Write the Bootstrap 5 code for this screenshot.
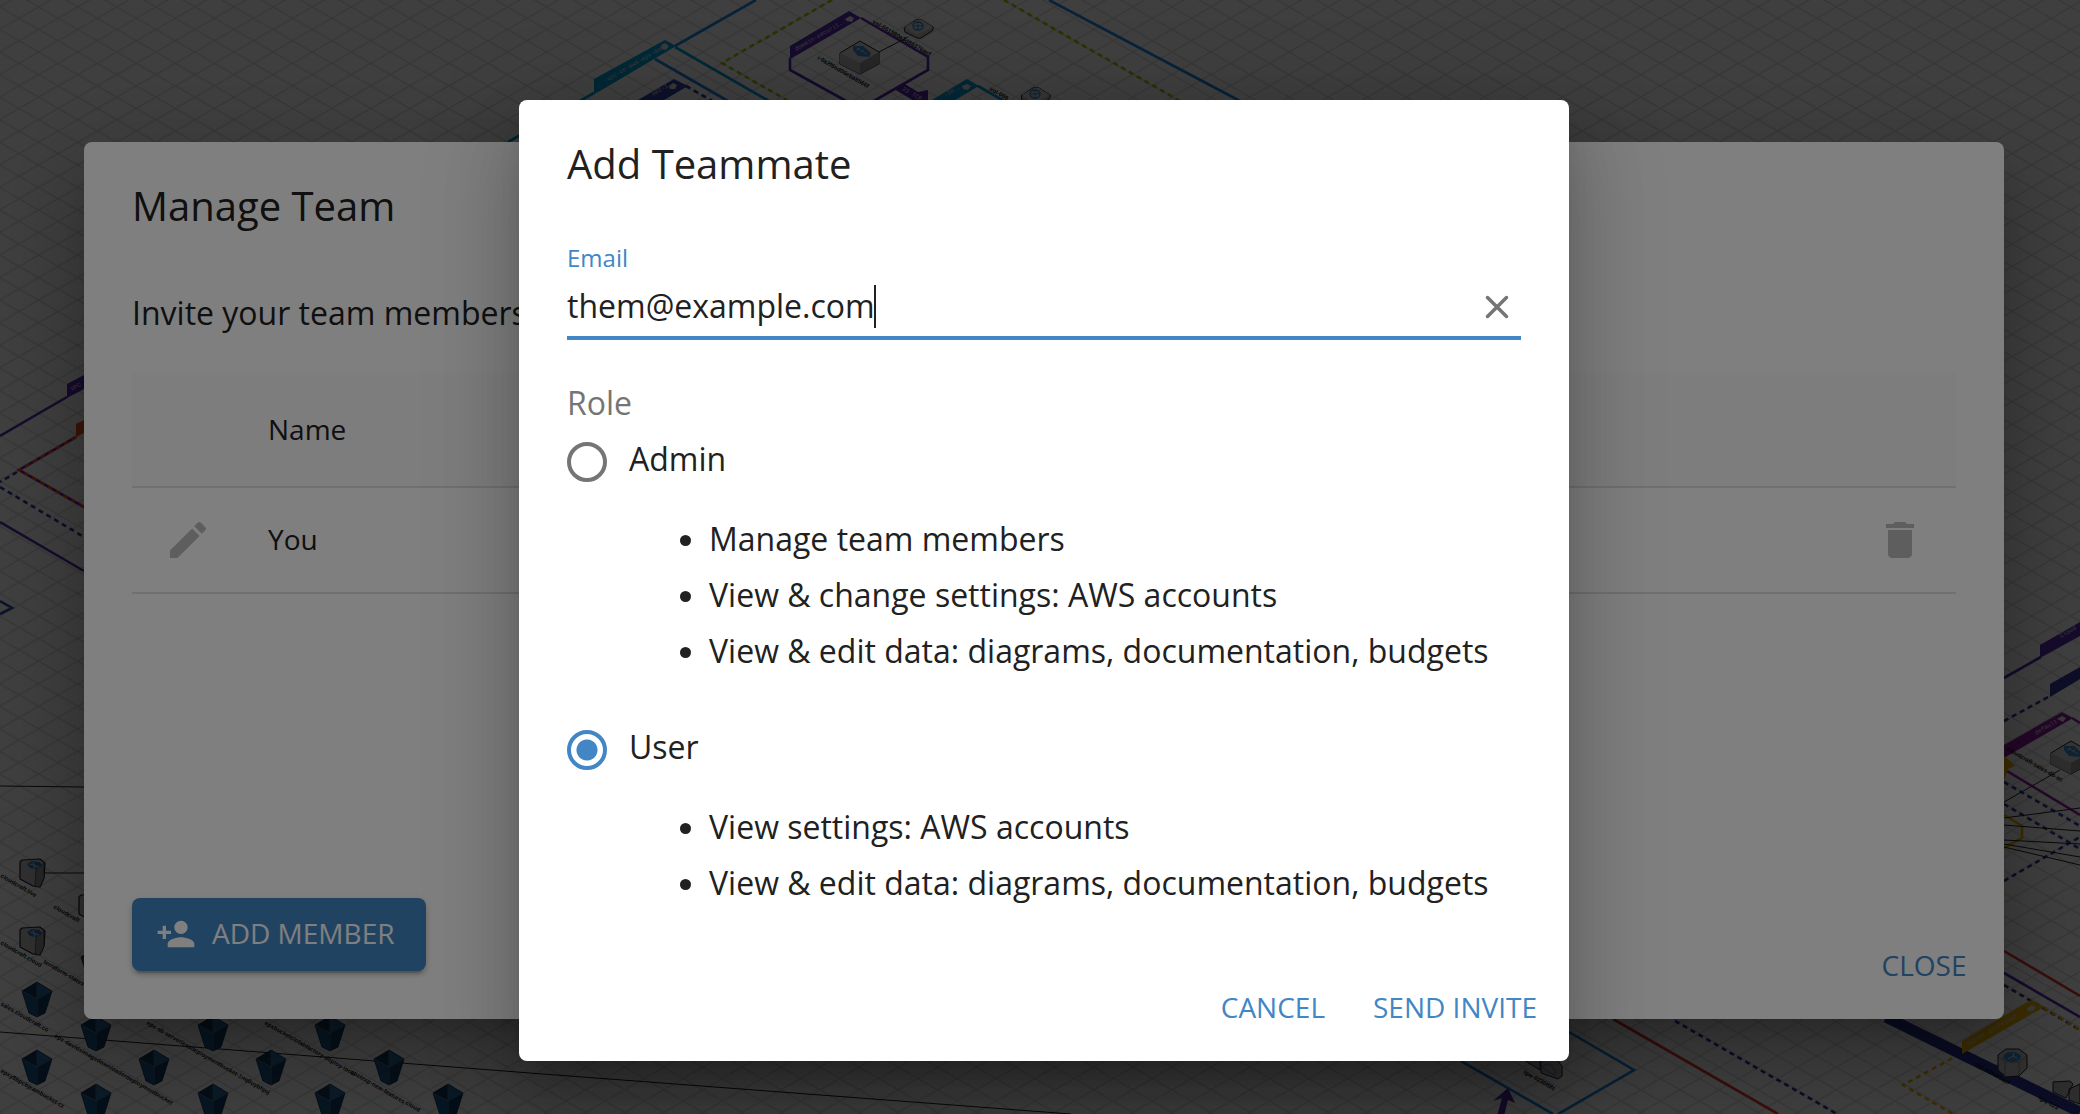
<!DOCTYPE html>
<html lang="en">
<head>
<meta charset="utf-8">
<meta name="viewport" content="width=device-width, initial-scale=1">
<title>Add Teammate</title>
<link href="https://cdn.jsdelivr.net/npm/bootstrap@5.3.0/dist/css/bootstrap.min.css" rel="stylesheet">
<style>
  :root { --brand: #4286c5; --ink: #212121; --muted: #757575; }
  body { font-family: "Open Sans", "Noto Sans", sans-serif; font-size: 32px; line-height: 56px; color: var(--ink); background: #fff; }
  .canvas-map { position: fixed; inset: 0; width: 100%; height: 100%; }
  .canvas-map text { font-family: "Liberation Sans", sans-serif; font-weight: 700; font-size: 6px; }
  .canvas-map .tag-text { font-family: "Liberation Mono", monospace; font-weight: 400; fill: #e4e4e4; }
  .canvas-map .dots { stroke-dasharray: 5 4; }

  .layer { position: fixed; inset: 0; padding: 47px 0 0 8px; }
  .layer-back { background: rgba(0,0,0,.5); }
  .layer-front { background: rgba(0,0,0,.5); overflow: auto; }
  .panel { border: 0; border-radius: 8px; background: #fff; color: var(--ink); box-shadow: 0 22px 30px -14px rgba(0,0,0,.2), 0 48px 76px 6px rgba(0,0,0,.14), 0 18px 92px 16px rgba(0,0,0,.12); }
  .panel-team { max-width: 1920px; margin: 95px 16px; }
  .panel-invite { max-width: 1050px; }
  .panel-title { font-size: 40px; line-height: 64px; font-weight: 400; padding: 32px 48px 0; margin: 0; }
  .panel-body { padding: 0 48px; }

  .team-intro { margin: 47px 0 32px; }
  .team-table { margin: 0; font-size: 28px; line-height: 48px; --bs-table-color: var(--ink); }
  .team-table th, .team-table td { font-weight: 400; border-bottom: 2px solid #e0e0e0; padding: 27px 32px 29px; vertical-align: middle; }
  .team-table th { background: #fafafa; height: 114px; }
  .team-table .cell-icon { width: 104px; padding: 28px 24px 28px 32px; }
  .team-table .cell-last { width: 112px; padding: 28px 32px; }
  .icon-btn { display: flex; border: 0; background: none; padding: 0; color: #bdbdbd; }

  .act { font-size: 28px; line-height: 49px; padding: 11px 16px 13px; min-width: 128px; border: 0; color: var(--brand); text-transform: uppercase; }
  .act-solid { background: var(--brand); color: #fff; padding: 11px 32px 13px 24px; border-radius: 8px; box-shadow: 0 6px 2px -4px rgba(0,0,0,.2), 0 4px 4px rgba(0,0,0,.14), 0 2px 10px rgba(0,0,0,.12); margin: 0 0 32px 32px; }
  .act-solid:hover { background: #3878b4; color: #fff; }
  .panel-actions { padding: 16px; gap: 16px; }
  .team-actions { padding-top: 0; }

  .field { margin-top: 46px; border-bottom: 4px solid var(--brand); }
  .field-label { font-size: 24px; line-height: 32px; color: var(--brand); display: block; }
  .field-input { border: 0; outline: 0; padding: 0; font-size: 32px; line-height: 44px; height: 44px; color: var(--ink); min-width: 0; caret-color: transparent; background: none; }
  .field-row { position: relative; padding: 10px 0 8px; }
  .caret { position: absolute; left: 307px; top: 11px; width: 2px; height: 43px; background: var(--ink); }
  .clear-btn { width: 48px; justify-content: center; color: var(--muted); padding-top: 2px; }

  .role-legend { font-size: 32px; line-height: 48px; color: var(--muted); padding-top: 39px; margin: 0 0 4px; float: none; }
  .role-row { gap: 22px; height: 56px; }
  .role-radio { appearance: none; width: 40px; height: 40px; margin: 6px 0 0; border: 4px solid var(--muted); border-radius: 50%; }
  .role-radio:checked { border-color: var(--brand); background: radial-gradient(circle, var(--brand) 10px, transparent 11px); }
  .role-list { margin: 24px 0 40px; padding-left: 142px; }
  .role-list-end { margin-bottom: 45px; }
</style>
</head>
<body>

<svg class="canvas-map" viewBox="0 0 2080 1114" preserveAspectRatio="xMidYMid slice" aria-hidden="true">
  <defs>
    <pattern id="iso" width="39.08" height="22.56" patternUnits="userSpaceOnUse" x="38.6" y="6.9">
      <path d="M0 0L39.08 22.56M0 22.56L39.08 0" stroke="#dcdcdc" stroke-width="1.3"/>
    </pattern>
    <g id="bucket" stroke="#0c2438" stroke-width=".8" stroke-linejoin="round">
      <path d="M-15 9L0 0V17Z" fill="#143a5a"/><path d="M15 9L0 0V17Z" fill="#2c6ea5"/>
      <path d="M-15 9L0 17V35L-8 31Z" fill="#1d5a8f"/><path d="M15 9L0 17V35L8 31Z" fill="#153f66"/>
      <path d="M-15 9L0 17L15 9M0 0V35" fill="none" stroke="#5a88ae"/>
    </g>
    <g id="cube" stroke="#222" stroke-width="1" stroke-linejoin="round">
      <path d="M0 0L19 11V23L0 33L-20 23V12Z" fill="#d8d8d8"/>
      <path d="M-20 12L0 22V33L-20 23Z" fill="#bbb" stroke="none"/><path d="M0 22L19 11V23L0 33Z" fill="#999" stroke="none"/>
      <path d="M-7 5L3 5L11 12L9 16L-2 15L-7 9Z" fill="#3d8fd1" stroke="none"/>
      <path d="M-3 7L7 13M-4 9L0 7M1 11L4 9" stroke="#bcd" fill="none"/>
    </g>
    <g id="disk" stroke="#222" stroke-width="1" stroke-linejoin="round">
      <path d="M-15 0L-3 -8Q0 -9 3 -8L14 -1Q15 1 13 3L2 10Q-1 11 -4 9L-14 4Z" fill="#bdbdbd"/>
      <path d="M-14 -1L-2 -8Q0 -9 3 -8L14 -1L0 6Q-2 7 -4 6Z" fill="#d8d8d8" stroke="none"/>
      <ellipse cx="-1" cy="-2" rx="5" ry="4" fill="none" stroke="#3d8fd1" stroke-width="1.4"/><path d="M-6-2H4M-1-6V2" stroke="#3d8fd1"/>
    </g>
    <g id="dns" stroke="#222" stroke-width="1.2" stroke-linejoin="round">
      <path d="M0 3L2 1L20 0L25 4L24 19L20 28L13 27L0 20Z" fill="#c4c4c4"/><path d="M16 10L24 4L24 19L20 28L15 27Z" fill="#999" stroke-width=".6"/>
      <path d="M7 5L12 2L20 3L22 7L17 10L10 9Z" fill="#2f78b8" stroke="none"/><path d="M10 5L19 8M13 3L15 9" stroke="#bcd"/>
    </g>
  </defs>
  <rect width="2080" height="1114" fill="#fff"/>
  <rect width="2080" height="1114" fill="url(#iso)"/>

  <g fill="none" stroke-width="2.6">
    <g stroke="#1e88e5"><path d="M756 0L675 46M655 59L728 101M1049 0L1240 101"/><path d="M1569 1032L1634 1070L1558 1114M1461 1061L1553 1114"/></g>
    <path d="M508 142L594 93M675 47L769 101M978 86L1004 101" stroke="#03a0d8"/>
    <path class="dots" d="M832 0L722 63L790 102M1004 0L1180 101" stroke="#afc400"/>
    <path class="dots" d="M686 86L712 101M17 472L0 482M0 487L84 537M2004 721L2050 696M2004 782L2080 826M2004 804L2080 849M2004 881L2080 837" stroke="#303f9f"/>
    <path d="M790 58V70L848 102M861 18L928 57V70L872 102M0 436L67 397M0 522L84 571M2004 678L2041 657M2004 973L2080 1017" stroke="#5b2db0"/>
    <path d="M76 437L19 470L84 507" stroke="#7b1fa2"/><path class="dots" d="M76 437L19 470L84 507" stroke="#f4511e"/>
    <path d="M0 601L12 608L0 614" stroke="#3949ab"/>
    <path d="M2072 718L2080 723M2007 771L2080 815" stroke="#9c1fb0"/>
    <path d="M2004 815L2022 826V838L2004 848" stroke="#f0b400"/>
    <path d="M2004 951L2080 996M1613 1019L1778 1114" stroke="#e53935"/>
    <path class="dots" d="M1675 1021L1837 1114M2004 985L2080 1030" stroke="#4527a0"/>
    <path class="dots" d="M1960 1054L1903 1085L1953 1114M2044 1008L2080 1030" stroke="#f0b400"/>
    <path d="M1886 1017L1965 1056L2080 1112" stroke="#283593" stroke-width="11"/>
    <path d="M0 786L84 787M45 873H84M0 1032L530 1073L1071 1114M879 52L908 37M2004 802L2060 770M2004 818L2080 808M2004 825L2080 831M2004 840L2080 844M2004 844L2080 857M2004 847L2080 865" stroke="#222" stroke-width="1"/>
  </g>

  <path d="M594 79L665 40L676 46L600 91L594 94Z" fill="#03a0d8"/>
  <path d="M932 100L967 79L979 86L955 100Z" fill="#03a0d8"/>
  <path d="M638 100L674 79L688 86L664 100Z" fill="#3949ab"/>
  <path d="M790 46L849 11L861 18L792 58L790 58ZM67 384L84 375V389L67 398ZM2040 645L2080 622V636L2040 658Z" fill="#5b2db0"/>
  <path d="M894 89L903 83L918 92L928 90V101H914Z" fill="#5b2db0"/>
  <path d="M76 424L84 420V433L76 437Z" fill="#f4511e"/>
  <path d="M2050 684L2080 667V679L2050 697Z" fill="#303f9f"/>
  <path d="M2004 745L2062 712L2073 718L2004 758Z" fill="#8e1f9e"/>
  <path d="M2000 752L2015 766L2008 769L2004 780Z" fill="#f0b400"/>
  <path d="M1962 1041L2031 1000L2044 1007L1962 1054Z" fill="#f0b400"/>
  <path d="M1508 1088L1515 1103L1508 1100L1504 1116H1497L1502 1098L1493 1101Z" fill="#5b2db0"/>
  <g fill="#e4e4e4"><path d="M661 45L665 43L669 46L666 50L662 49Z"/><path d="M669 86L673 83L677 85L675 89L670 89Z"/><path d="M845 19L850 16L854 18L852 22L847 21Z"/><path d="M962 86L967 84L971 86L968 90L963 89Z"/><path d="M2057 719L2062 716L2066 718L2063 722Z"/><path d="M2027 1008L2032 1005L2036 1007L2033 1011L2028 1011Z"/></g>

  <use href="#cube" x="860" y="41"/><use href="#disk" x="919" y="28"/><use href="#disk" x="1036" y="96"/><use href="#cube" x="2071" y="741"/>
  <use href="#dns" x="20" y="859"/><use href="#dns" x="20" y="927"/><use href="#dns" x="79" y="894"/>
  <use href="#bucket" x="96" y="948"/><use href="#bucket" x="37" y="982"/><use href="#bucket" x="96" y="1016"/><use href="#bucket" x="213" y="1016"/><use href="#bucket" x="330" y="1016"/>
  <use href="#bucket" x="37" y="1050"/><use href="#bucket" x="154" y="1050"/><use href="#bucket" x="271" y="1050"/><use href="#bucket" x="389" y="1050"/>
  <use href="#bucket" x="96" y="1084"/><use href="#bucket" x="213" y="1084"/><use href="#bucket" x="330" y="1084"/><use href="#bucket" x="448" y="1084"/>
  <g stroke="#222" stroke-linejoin="round">
    <path d="M1998 1055L2006 1049H2019L2027 1055V1068L2019 1076L2006 1077L1998 1070Z" fill="#c4c4c4"/><path d="M2005 1062V1077M2019 1062V1076M1998 1056L2005 1062H2019L2027 1056" fill="none" stroke="#888"/>
    <ellipse cx="2012" cy="1057" rx="9" ry="5" fill="#3d8fd1" stroke="none"/><path d="M2008 1059L2013 1056L2017 1058M2013 1056L2014 1053" stroke="#dde" fill="none"/>
    <path d="M2053 1082L2070 1081L2073 1084L2066 1098L2053 1092ZM2069 1089L2080 1084V1104L2069 1100Z" fill="#b5b5b5"/>
    <path d="M1524 1060H1540V1070ZM1541 1060H1557L1562 1066V1076L1558 1079L1541 1073Z" fill="#bbb"/><path d="M1544 1069Q1542 1065 1547 1064Q1551 1063 1553 1069Q1558 1071 1554 1075Z" fill="none" stroke="#3d8fd1"/>
  </g>

  <text class="tag-text" transform="translate(608 81) rotate(-30)">vpc-cc-aws-epx-demo</text>
  <text class="tag-text" transform="translate(796 51) rotate(-30)">domain-securit...</text>
  <text class="tag-text" transform="translate(653 96) rotate(-30)">net-1</text>
  <text class="tag-text" transform="translate(945 97) rotate(-30)">-Se...</text>
  <text class="tag-text" transform="translate(2036 735) rotate(-30)">default</text>
  <text class="tag-text" transform="translate(1968 1046) rotate(-30)">subnet-01cf678af</text>
  <text class="tag-text" transform="translate(72 391) rotate(-30)">VPC</text>
  <text class="tag-text" transform="translate(902 90) rotate(30)">22 TCP</text>
  <text class="tag-text" transform="translate(2061 638) rotate(-30)">Cloud</text>
  <g fill="#111">
    <text transform="translate(872 23) rotate(30)">vol-061580a3d86376aef</text>
    <text transform="translate(817 59) rotate(30)">i-0a2f6ed06eba8566f</text>
    <text transform="translate(989 90) rotate(30)">vol-009</text>
    <text transform="translate(0 877) rotate(30)">cloudcraft.live</text>
    <text transform="translate(53 908) rotate(30)">cloudcraft</text>
    <text transform="translate(0 944) rotate(30)">cloudcraft.cloud</text>
    <text transform="translate(43 963) rotate(30)">terraform-states</text>
    <text transform="translate(0 1005) rotate(30)">sales.cloudcraft.co</text>
    <text transform="translate(54 1037) rotate(30)">epx-davidsimagedownloaderdeploymentbucket</text>
    <text transform="translate(0 1072) rotate(30)">epxy8bpcbjeambucket-cz</text>
    <text transform="translate(146 1024) rotate(30)">epx-sb-serverlessdeploymentbucket-1nq0uybhjoj</text>
    <text transform="translate(264 1024) rotate(30)">epxbucketclofabfactory-deploy-local</text>
    <text transform="translate(350 1073) rotate(30)">costexp-new-features</text>
    <text transform="translate(405 1104) rotate(30)">cloud</text>
    <text transform="translate(2006 750) rotate(30)">cloudcraft-sales-db-ec</text>
    <text transform="translate(1974 1065) rotate(30)">sqs-03fe01aef</text>
    <text transform="translate(1523 1073) rotate(30)">igw-0230f0fc</text>
    <text transform="translate(2038 1099) rotate(30)">igw-023</text>
  </g>
</svg>

<div class="layer layer-back d-flex justify-content-center" role="dialog" aria-labelledby="team-title">
  <section class="panel panel-team modal-content flex-grow-1 h-auto">
    <h2 class="panel-title" id="team-title">Manage Team</h2>
    <div class="panel-body flex-grow-1">
      <p class="team-intro">Invite your team members</p>
      <table class="table team-table">
        <thead>
          <tr><th class="cell-icon" scope="col" aria-label="Edit"></th><th scope="col">Name</th><th class="cell-last" scope="col" aria-label="Remove"></th></tr>
        </thead>
        <tbody>
          <tr>
            <td class="cell-icon"><button type="button" class="icon-btn" aria-label="Edit member"><svg width="48" height="48" viewBox="0 0 24 24" fill="currentColor"><path d="M3 17.25V21h3.75L17.81 9.94l-3.75-3.75L3 17.25zM20.71 7.04c.39-.39.39-1.02 0-1.41l-2.34-2.34c-.39-.39-1.02-.39-1.41 0l-1.83 1.83 3.75 3.75 1.83-1.83z"/></svg></button></td>
            <td>You</td>
            <td class="cell-last"><button type="button" class="icon-btn" aria-label="Remove member"><svg width="48" height="48" viewBox="0 0 24 24" fill="currentColor"><path d="M6 19c0 1.1.9 2 2 2h8c1.1 0 2-.9 2-2V7H6v12zM19 4h-3.5l-1-1h-5l-1 1H5v2h14V4z"/></svg></button></td>
          </tr>
        </tbody>
      </table>
    </div>
    <div class="panel-actions team-actions d-flex justify-content-between align-items-end">
      <button type="button" class="btn act act-solid d-flex align-items-center gap-3"><svg width="40" height="40" viewBox="0 0 24 24" fill="currentColor" aria-hidden="true"><path d="M15 12c2.21 0 4-1.79 4-4s-1.79-4-4-4-4 1.790-4 4 1.790 4 4 4zm-9-2V7H4v3H1v2h3v3h2v-3h3v-2H6zm9 4c-2.670 0-8 1.340-8 4v2h16v-2c0-2.660-5.330-4-8-4z"/></svg>Add member</button>
      <button type="button" class="btn act">Close</button>
    </div>
  </section>
</div>

<div class="layer layer-front d-flex" role="dialog" aria-modal="true" aria-labelledby="invite-title">
  <form class="panel panel-invite modal-content m-auto">
    <h2 class="panel-title" id="invite-title">Add Teammate</h2>
    <div class="panel-body">
      <div class="field">
        <label class="field-label" for="email">Email</label>
        <div class="field-row d-flex align-items-center">
          <input class="field-input flex-grow-1" id="email" type="text" inputmode="email" value="them@example.com">
          <span class="caret"></span>
          <button type="button" class="icon-btn clear-btn" aria-label="Clear email"><svg width="24" height="24" viewBox="0 0 24 24" fill="none" stroke="currentColor" stroke-width="3.5" stroke-linecap="round"><path d="M2.500 2.500L21.500 21.500M21.500 2.500L2.500 21.500"/></svg></button>
        </div>
      </div>
      <fieldset>
        <legend class="role-legend">Role</legend>
        <div class="role-row d-flex align-items-center">
          <input class="role-radio" type="radio" name="role" id="role-admin">
          <label for="role-admin">Admin</label>
        </div>
        <ul class="role-list">
          <li>Manage team members</li>
          <li>View &amp; change settings: AWS accounts</li>
          <li>View &amp; edit data: diagrams, documentation, budgets</li>
        </ul>
        <div class="role-row d-flex align-items-center">
          <input class="role-radio" type="radio" name="role" id="role-user" checked>
          <label for="role-user">User</label>
        </div>
        <ul class="role-list role-list-end">
          <li>View settings: AWS accounts</li>
          <li>View &amp; edit data: diagrams, documentation, budgets</li>
        </ul>
      </fieldset>
    </div>
    <div class="panel-actions d-flex justify-content-end">
      <button type="button" class="btn act">Cancel</button>
      <button type="submit" class="btn act">Send invite</button>
    </div>
  </form>
</div>

<script src="https://cdn.jsdelivr.net/npm/bootstrap@5.3.0/dist/js/bootstrap.bundle.min.js"></script>
</body>
</html>
